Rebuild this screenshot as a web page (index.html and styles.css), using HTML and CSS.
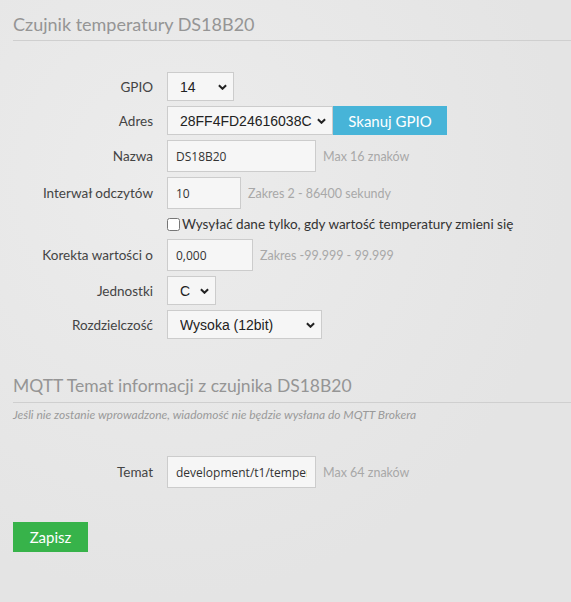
FILE: index.html
```html
<!DOCTYPE html>
<html lang="pl">
<head>
    <meta charset="UTF-8">
    <meta name="viewport" content="width=device-width, initial-scale=1.0">
    <title>Czujnik temperatury DS18B20</title>
    <link rel="stylesheet" href="styles.css">
</head>
<body>

    <form class="sensor-form">
        <h2 class="section-title">Czujnik temperatury DS18B20</h2>

        <div class="fields">
            <div class="row">
                <label class="label">GPIO</label>
                <div class="select-wrap w-gpio">
                    <select><option>14</option></select>
                    <svg class="chevron" viewBox="0 0 10 6"><path d="M1 1l4 4 4-4"/></svg>
                </div>
            </div>

            <div class="row">
                <label class="label">Adres</label>
                <div class="select-wrap w-addr">
                    <select><option>28FF4FD24616038C</option></select>
                    <svg class="chevron" viewBox="0 0 10 6"><path d="M1 1l4 4 4-4"/></svg>
                </div>
                <button type="button" class="btn btn-scan">Skanuj GPIO</button>
            </div>

            <div class="row">
                <label class="label">Nazwa</label>
                <input class="text w-name" type="text" value="DS18B20">
                <span class="hint">Max 16 znaków</span>
            </div>

            <div class="row">
                <label class="label">Interwał odczytów</label>
                <input class="text w-interval" type="text" value="10">
                <span class="hint">Zakres 2 - 86400 sekundy</span>
            </div>

            <div class="row row-check">
                <span class="label"></span>
                <label class="check"><input type="checkbox"> Wysyłać dane tylko, gdy wartość temperatury zmieni się</label>
            </div>

            <div class="row">
                <label class="label">Korekta wartości o</label>
                <input class="text w-correction" type="text" value="0,000">
                <span class="hint">Zakres -99.999 - 99.999</span>
            </div>

            <div class="row">
                <label class="label">Jednostki</label>
                <div class="select-wrap w-unit">
                    <select><option>C</option></select>
                    <svg class="chevron" viewBox="0 0 10 6"><path d="M1 1l4 4 4-4"/></svg>
                </div>
            </div>

            <div class="row">
                <label class="label">Rozdzielczość</label>
                <div class="select-wrap w-res">
                    <select><option>Wysoka (12bit)</option></select>
                    <svg class="chevron" viewBox="0 0 10 6"><path d="M1 1l4 4 4-4"/></svg>
                </div>
            </div>
        </div>

        <h3 class="section-title mqtt-title">MQTT Temat informacji z czujnika DS18B20</h3>
        <p class="note">Jeśli nie zostanie wprowadzone, wiadomość nie będzie wysłana do MQTT Brokera</p>

        <div class="fields mqtt-fields">
            <div class="row">
                <label class="label">Temat</label>
                <input class="text w-name" type="text" value="development/t1/temperature">
                <span class="hint">Max 64 znaków</span>
            </div>
        </div>

        <button type="submit" class="btn btn-save">Zapisz</button>
    </form>

</body>
</html>
```

FILE: styles.css
```css
body {
    font-family: Lato, 'Open Sans', sans-serif;
    background: radial-gradient(ellipse at 30% 30%, #ececec, #e4e4e4 70%);
    color: #444;
    margin: 0;
    padding: 0;
    min-height: 100vh;
    overflow: hidden;
}

.sensor-form {
    padding-left: 13px;
}

.section-title {
    font-size: 18px;
    font-weight: normal;
    line-height: 24px;
    color: #959595;
    margin: 12px 0 0;
    padding-bottom: 4px;
    border-bottom: 1px solid #cfcfcf;
}

.fields {
    margin-top: 31px;
}

.row {
    display: flex;
    align-items: center;
    gap: 14px;
    margin-bottom: 5px;
}

.label {
    width: 140px;
    flex-shrink: 0;
    text-align: right;
    font-size: 13.5px;
    color: #444;
}

.text,
select {
    box-sizing: border-box;
    font-family: 'Open Sans', sans-serif;
    font-size: 12px;
    color: #333;
    background: #f6f6f6;
    border: 1px solid #ccc;
    border-radius: 0;
    outline: none;
}

.text {
    height: 32px;
    padding: 0 8px;
}

.select-wrap {
    position: relative;
}

select {
    appearance: none;
    -webkit-appearance: none;
    width: 100%;
    height: 29px;
    padding: 0 18px 0 12px;
    font-family: 'Liberation Sans', Arial, sans-serif;
    font-size: 14px;
    color: #222;
}

.chevron {
    position: absolute;
    right: 7px;
    top: 12px;
    width: 9px;
    height: 6px;
    fill: none;
    stroke: #222;
    stroke-width: 2.2;
    pointer-events: none;
}

.w-gpio { width: 67px; }
.w-addr { width: 166px; }
.w-unit { width: 49px; }
.w-res { width: 155px; }
.w-name { width: 149px; }
.w-interval { width: 74px; }
.w-correction { width: 86px; }

.w-addr + .btn-scan {
    margin-left: -14px;
}

.hint {
    font-size: 12.5px;
    color: #a8a8a8;
    margin-left: -7px;
}

.row-check {
    height: 20px;
}

.check {
    font-size: 13.5px;
    color: #333;
    display: flex;
    align-items: center;
    gap: 2px;
}

.check input {
    width: 13px;
    height: 13px;
    margin: 0;
}

.btn {
    border: none;
    border-radius: 0;
    color: #fff;
    font-family: Lato, 'Open Sans', sans-serif;
    font-size: 15px;
    cursor: pointer;
}

.btn-scan {
    background: #47b4d8;
    width: 114px;
    height: 29px;
}

.mqtt-title {
    font-size: 17.5px;
    margin-top: 35px;
}

.note {
    font-size: 12px;
    font-style: italic;
    color: #9a9a9a;
    margin: 4px 0 0;
}

.mqtt-fields {
    margin-top: 34px;
}

.btn-save {
    background: #37b34a;
    width: 75px;
    height: 30px;
    margin-top: 29px;
}
```
